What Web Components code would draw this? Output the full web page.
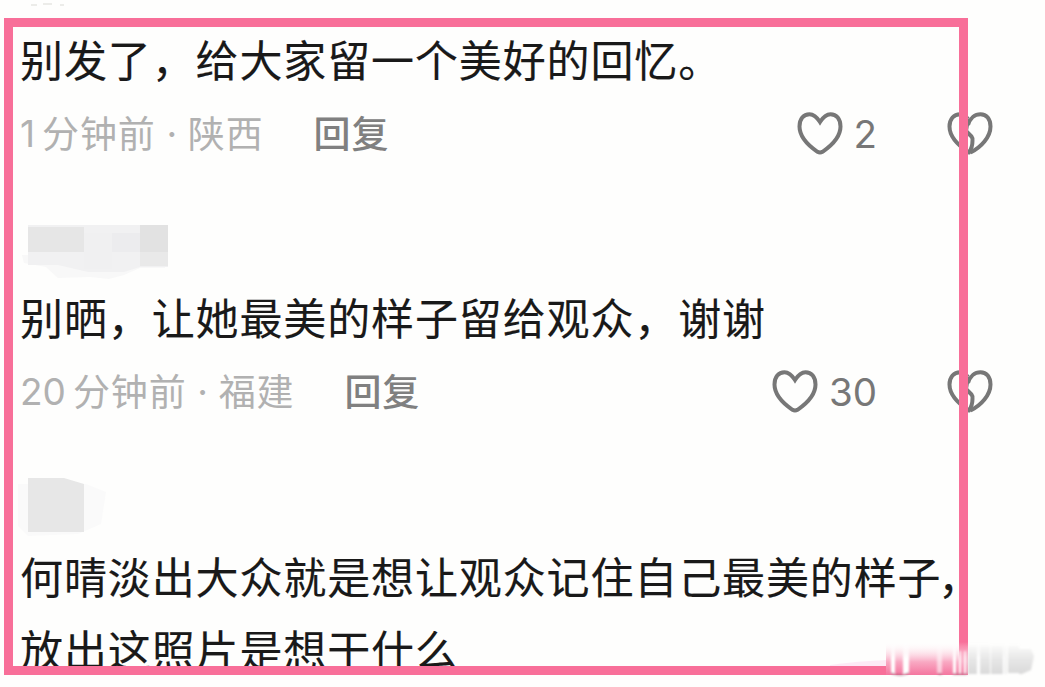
<!DOCTYPE html>
<html lang="zh-CN">
<head>
<meta charset="utf-8">
<title>评论</title>
<style>
	body {
		margin: 0;
		background: #fefefd;
		font-family: Inter, "Noto Sans CJK SC", sans-serif;
	}

	.tight {
		letter-spacing: -2.500px;
	}
</style>
</head>
<body>
<comment-list>
	<comment-item time="1" place="陕西" likes="2">别发了，给大家留一个美好的回忆。</comment-item>
	<comment-item time="20" place="福建" likes="30"><masked-name slot="name"></masked-name>别晒，让她最美的样子留给观众，谢谢</comment-item>
	<comment-item><masked-name slot="name" short></masked-name>何晴淡出大众就是想让观众记住自己最美的样<span class="tight">子，</span><br>放出这照片是想干什么</comment-item>
</comment-list>

<script>
class HeartIcon extends HTMLElement {
	constructor() {
		super();

		this.attachShadow({mode: 'open'});
		this.shadowRoot.innerHTML = `
			<style>
				:host {
					display: block;
					width: 46px;
					height: 44px;
				}

				svg {
					display: block;
					fill: none;
					stroke: #777;
					stroke-width: 4;
					stroke-linejoin: round;
				}
			</style>
			<svg width="46" height="44" viewBox="0 0 46 44">
				${this.hasAttribute('broken') ? `
					<path d="M21 7C18.500 3.500 16 2.200 13 2.200C7 2.200 2.500 7 2.500 14.500C2.500 25 12 34 22 40.500C24.500 37 25.500 32 25.500 28.500Q26 26.500 24.500 24.500L19 19L21 7"/>
					<path d="M21 13C23 6 28 2.200 33.500 2.200C39.500 2.200 43.500 7 43.500 14.500C43.500 25 34 35.500 23.500 40.500"/>
				` : `
					<path d="M23 10C19.500 4.500 16.500 2.200 12.500 2.200C6.500 2.200 2.500 7 2.500 14.500C2.500 25.500 12 34 20.500 39.800Q23 41.300 25.500 39.800C34 34 43.500 25.500 43.500 14.500C43.500 7 39.500 2.200 33.500 2.200C29.500 2.200 26.500 4.500 23 10Z" stroke-linejoin="miter"/>
				`}
			</svg>
		`;
	}
}

class MaskedName extends HTMLElement {
	constructor() {
		super();

		this.attachShadow({mode: 'open'});
		this.shadowRoot.innerHTML = `
			<style>
				:host {
					display: block;
					height: 57px;
					margin-left: -2px;
				}

				:host([short]) svg {
					transform: translateY(-6px);
				}

				svg {
					display: block;
					overflow: visible;
				}
			</style>
			${this.hasAttribute('short') ? `
				<svg width="100" height="57">
					<path d="M0 6L68 6L88 14L83 46L60 56L10 58L0 48Z" fill="#fafafa"/>
					<path d="M10 0H46L66 6V54H10Z" fill="#e7e7e7"/>
				</svg>
			` : `
				<svg width="170" height="57">
					<path d="M4 30H150L147 43H122L106 50L91 54L72 52L40 53L28 42L6 38Z" fill="#f8f8f8"/>
					<path d="M10 0H150V42H122L106 47H70L40 40H10Z" fill="#f1f1f2"/>
					<path d="M10 2H66V27H10Z" fill="#e6e6e6"/>
					<path d="M66 8H94V44H66Z" fill="#f0f0f1"/>
					<path d="M94 8H122V27H94Z" fill="#ececee"/>
					<path d="M122 0H150V27H122Z" fill="#e2e2e2"/>
					<path d="M122 27H150V41H122Z" fill="#e9e9e9"/>
				</svg>
			`}
		`;
	}
}

class CommentItem extends HTMLElement {
	constructor() {
		super();

		this.attachShadow({mode: 'open'});
		this.shadowRoot.innerHTML = `
			<style>
				:host {
					display: block;
					height: 258.300px;
				}

				.text {
					margin: 0;
					padding-top: 1px;
					font-size: 43px;
					line-height: 73px;
					letter-spacing: .880px;
					color: #191919;
					-webkit-text-stroke: .150px #191919;
					white-space: nowrap;
				}

				.meta {
					display: flex;
					align-items: center;
					height: 56px;
					margin-top: 7.500px;
					font-size: 37px;
					line-height: 56px;
					color: #b1b1b1;
					white-space: nowrap;
				}

				.cjk {
					position: relative;
					top: 1px;
					letter-spacing: .900px;
				}

				.num {
					margin-right: 7px;
				}

				.dot {
					width: 32px;
					text-align: center;
				}

				.reply {
					margin-left: 50px;
					font-weight: 500;
					color: #808080;
				}

				.actions {
					display: flex;
					align-items: center;
					margin-left: auto;
				}

				.likes {
					margin-left: 11px;
					font-size: 38.500px;
					color: #777;
				}

				[broken] {
					margin-left: 70px;
				}
			</style>
			<slot name="name"></slot>
			<p class="text"><slot></slot></p>
			${this.hasAttribute('time') ? `
				<div class="meta">
					<span class="num">${this.getAttribute('time')}</span>
					<span class="cjk">分钟前</span>
					<span class="dot">·</span>
					<span class="cjk">${this.getAttribute('place')}</span>
					<span class="cjk reply">回复</span>
					<div class="actions">
						<heart-icon></heart-icon>
						<span class="likes">${this.getAttribute('likes')}</span>
						<heart-icon broken></heart-icon>
					</div>
				</div>
			` : ''}
		`;
	}
}

class CommentList extends HTMLElement {
	constructor() {
		super();

		this.attachShadow({mode: 'open'});
		this.shadowRoot.innerHTML = `
			<style>
				:host {
					display: block;
					position: relative;
					width: 1045px;
					height: 687px;
					overflow: hidden;
				}

				.list {
					box-sizing: border-box;
					height: 670px;
					padding: 24px 52px 0 20px;
					overflow: hidden;
				}

				::slotted(:nth-child(2)) {
					margin-top: -57px;
				}

				/* marker rectangle drawn over the comments */
				.frame {
					position: absolute;
					left: 4px;
					top: 18px;
					box-sizing: border-box;
					width: 964px;
					height: 657px;
					border: 9.500px solid #f86f99;
				}

				.smear {
					position: absolute;
					left: 800px;
					top: 636px;
				}

				.remnant {
					position: absolute;
					left: 28px;
					top: 0;
				}
			</style>
			<div class="list"><slot></slot></div>
			<svg class="remnant" width="60" height="10">
				<path d="M3 5H9M15 4H24M32 5H36" stroke="#ecece9" stroke-width="2"/>
			</svg>
			<div class="frame"></div>
			<svg class="smear" width="245" height="51">
				<defs>
					<linearGradient id="fade" x2="0" y2="1">
						<stop offset="0" stop-color="#fff" stop-opacity="0"/>
						<stop offset=".6" stop-color="#f9a9c3"/>
						<stop offset="1" stop-color="#f4769f"/>
					</linearGradient>
					<linearGradient id="gray" x2="0" y2="1">
						<stop offset="0" stop-color="#ddd" stop-opacity="0"/>
						<stop offset=".6" stop-color="#e4e4e4"/>
						<stop offset="1" stop-color="#dadada"/>
					</linearGradient>
					<linearGradient id="white" x2="0" y2="1">
						<stop offset="0" stop-color="#fff" stop-opacity=".2"/>
						<stop offset=".5" stop-color="#fff"/>
					</linearGradient>
					<filter id="soft"><feGaussianBlur stdDeviation=".8"/></filter>
				</defs>
				<path d="M30 29Q58 25 88 24V30H30Z" fill="#fdeaf5"/>
				<path d="M86 6H168V39H86Z" fill="url(#fade)"/>
				<g filter="url(#soft)">
					<path d="M168 8H190V38H168ZM191 9H206V38H191ZM208 9H219V37H208ZM219 13H231L234 20L231 34L222 38H219Z" fill="url(#gray)"/>
					<path d="M91 7H95V38H91ZM103 6H109V38H103ZM153 9H156V38H153ZM159 15H161V38H159ZM164 15H166V38H164ZM177 9H180V38H177ZM203 10H205V38H203Z" fill="url(#white)"/>
					<path d="M137 9H142V37H137Z" fill="url(#white)" opacity=".55"/>
					<path d="M91 37Q100 41 109 37M138 38H142M153 38H167" fill="none" stroke="#9e5974" stroke-width="1"/>
				</g>
			</svg>
		`;
	}
}

customElements.define('heart-icon', HeartIcon);
customElements.define('masked-name', MaskedName);
customElements.define('comment-item', CommentItem);
customElements.define('comment-list', CommentList);
</script>
</body>
</html>
